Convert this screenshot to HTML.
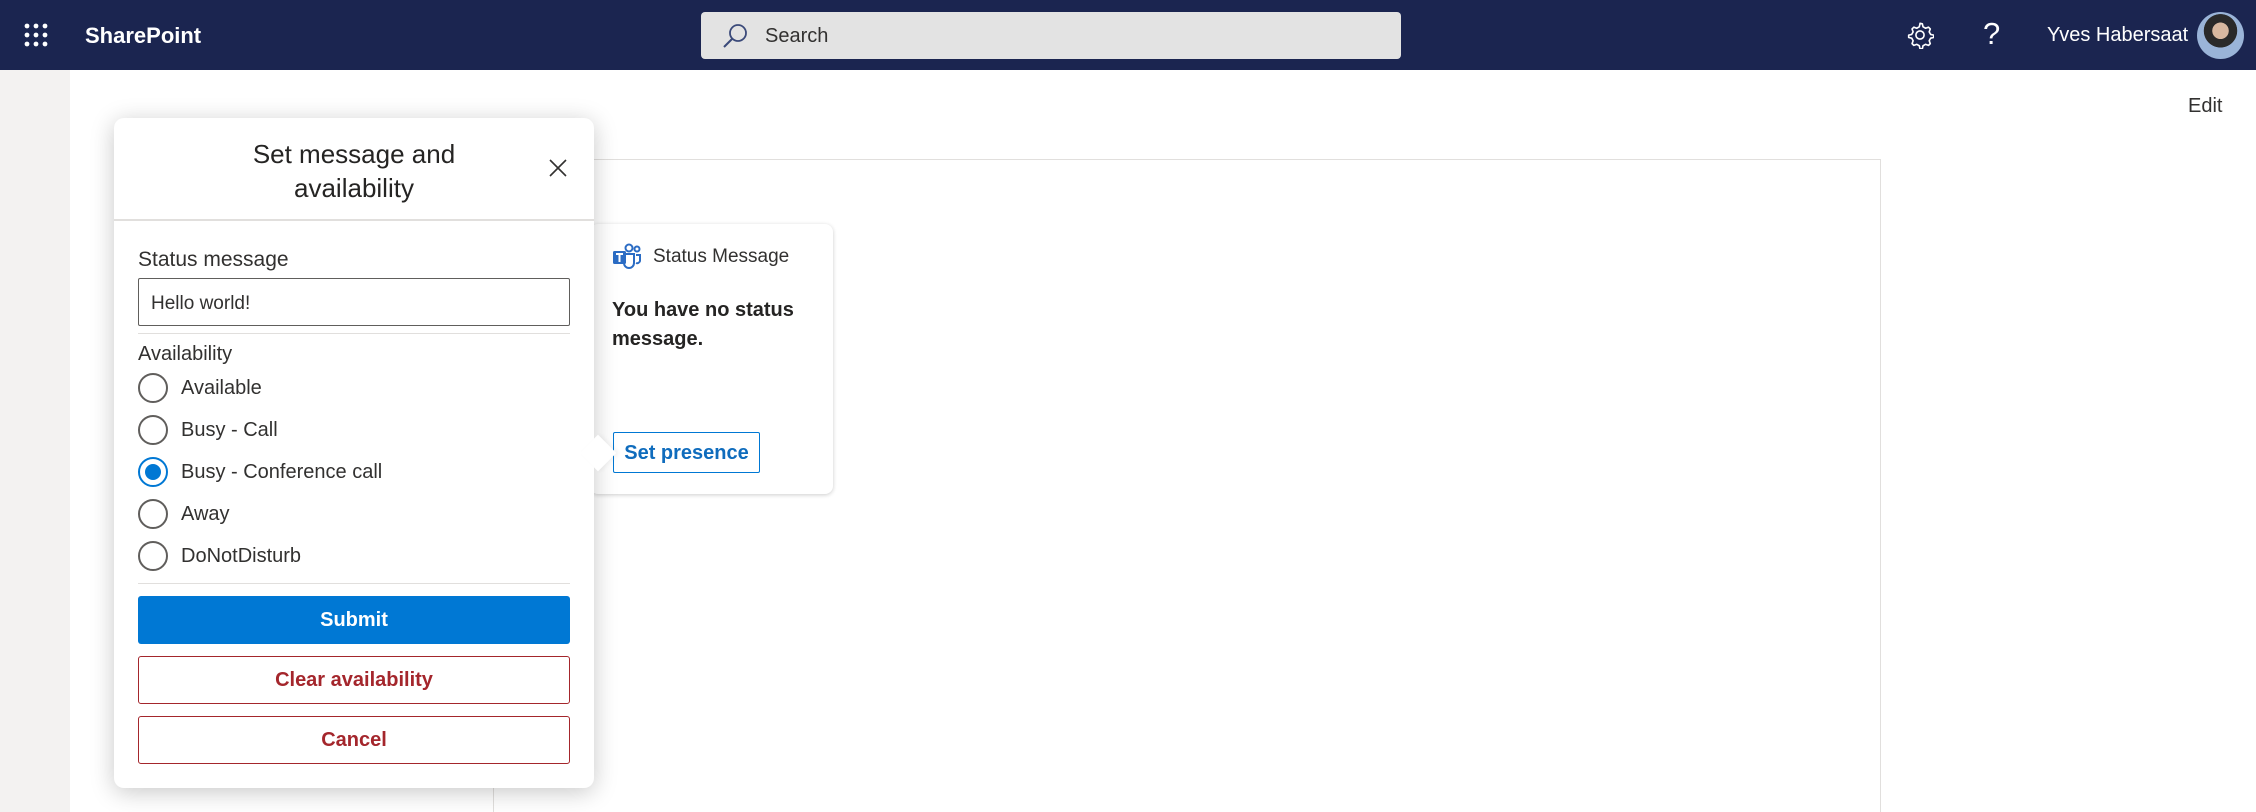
<!DOCTYPE html>
<html style="width:2256px;height:812px;overflow:hidden"><head><meta charset="utf-8"><style>
*{box-sizing:border-box;margin:0;padding:0}
body{width:2256px;height:812px;overflow:hidden;background:#fff;font-family:"Liberation Sans",sans-serif;color:#323130;position:relative}
.hdr{position:absolute;left:0;top:0;width:2256px;height:70px;background:#1b2550}
.abs{position:absolute}
.side{position:absolute;left:0;top:70px;width:70px;height:742px;background:#f3f2f1}
.radio{position:absolute;left:138px;width:30px;height:30px;border:2px solid #605e5c;border-radius:50%}
.rl{position:absolute;left:181px;font-size:20px;color:#323130}
.btn{position:absolute;left:138px;width:432px;height:48px;border-radius:3px;font-size:20px;font-weight:bold;text-align:center;line-height:48px}
</style></head><body>
<div class="hdr"></div>
<svg class="abs" style="left:24px;top:23px" width="24" height="24"><g fill="#fff"><circle cx="3" cy="3" r="2.4"/><circle cx="12" cy="3" r="2.4"/><circle cx="21" cy="3" r="2.4"/><circle cx="3" cy="12" r="2.4"/><circle cx="12" cy="12" r="2.4"/><circle cx="21" cy="12" r="2.4"/><circle cx="3" cy="21" r="2.4"/><circle cx="12" cy="21" r="2.4"/><circle cx="21" cy="21" r="2.4"/></g></svg>
<div class="abs" style="left:85px;top:23px;font-size:22px;font-weight:bold;color:#fff">SharePoint</div>
<div class="abs" style="left:701px;top:12px;width:700px;height:47px;background:#e3e3e3;border-radius:4px"></div>
<svg class="abs" style="left:722px;top:23px" width="26" height="26"><circle cx="16" cy="10" r="8" fill="none" stroke="#3b4a7a" stroke-width="1.8"/><path d="M10 16 L2 24" stroke="#3b4a7a" stroke-width="2"/></svg>
<div class="abs" style="left:765px;top:25px;font-size:20px;color:#323130">Search</div>
<svg class="abs" style="left:1906px;top:21px" width="28" height="28" viewBox="0 0 24 24"><path d="M12 2l2 0.4 0.6 2.6 2.2 1.2 2.5-0.9 1.5 1.5-0.9 2.5 1.2 2.2 2.6 0.6v2l-2.6 0.6-1.2 2.2 0.9 2.5-1.5 1.5-2.5-0.9-2.2 1.2-0.6 2.6h-2l-0.6-2.6-2.2-1.2-2.5 0.9-1.5-1.5 0.9-2.5-1.2-2.2-2.6-0.6v-2l2.6-0.6 1.2-2.2-0.9-2.5 1.5-1.5 2.5 0.9 2.2-1.2 0.6-2.6z" fill="none" stroke="#fff" stroke-width="1.4" stroke-linejoin="round"/><circle cx="12" cy="12" r="3.5" fill="none" stroke="#fff" stroke-width="1.4"/></svg>
<div class="abs" style="left:1983px;top:16px;font-size:31px;color:#fff">?</div>
<div class="abs" style="left:2047px;top:24px;font-size:20px;color:#fff">Yves Habersaat</div>
<div class="abs" style="left:2197px;top:12px;width:47px;height:47px;border-radius:50%;background:radial-gradient(circle at 50% 40%,#d8b8a0 0 22%,#2a2a2a 23% 45%,#9ab4d8 46%)"></div>
<div class="side"></div>
<div class="abs" style="left:2188px;top:95px;font-size:20px;color:#323130">Edit</div>
<div class="abs" style="left:493px;top:159px;width:1388px;height:653px;border:1px solid #e1dfdd;border-bottom:none"></div>
<!-- card -->
<div class="abs" style="left:590px;top:224px;width:243px;height:270px;background:#fff;border-radius:8px;box-shadow:0 1px 4px rgba(0,0,0,.2)"></div>
<svg class="abs" style="left:612px;top:243px" width="30" height="28" viewBox="0 0 30 28"><circle cx="17" cy="5" r="3.5" fill="none" stroke="#2b6cc4" stroke-width="2"/><circle cx="25" cy="6" r="2.5" fill="none" stroke="#2b6cc4" stroke-width="2"/><path d="M12 11h10v9a5 5 0 0 1-10 0z" fill="none" stroke="#2b6cc4" stroke-width="2"/><path d="M24 12h4v6a3 3 0 0 1-4 2" fill="none" stroke="#2b6cc4" stroke-width="2"/><rect x="1" y="8" width="13" height="13" rx="1.5" fill="#2b6cc4"/><path d="M4 11h7M7.5 11v8" stroke="#fff" stroke-width="2"/></svg>
<div class="abs" style="left:653px;top:246px;font-size:19px;color:#323130">Status Message</div>
<div class="abs" style="left:612px;top:296px;font-size:20px;font-weight:bold;line-height:29px;color:#252423">You have no status<br>message.</div>
<div class="abs" style="left:613px;top:432px;width:147px;height:41px;border:1px solid #0078d4;border-radius:2px;color:#0f6cbd;font-size:20px;font-weight:bold;text-align:center;line-height:41px">Set presence</div>
<!-- dialog -->
<div class="abs" style="left:114px;top:118px;width:480px;height:670px;background:#fff;border-radius:10px;box-shadow:0 4px 24px rgba(0,0,0,.22)"></div>
<div class="abs" style="left:585px;top:440px;width:26px;height:26px;background:#fff;transform:rotate(45deg);box-shadow:2px -2px 4px rgba(0,0,0,.05)"></div>
<div class="abs" style="left:114px;top:137px;width:480px;text-align:center;font-size:26px;line-height:34px;color:#252423;padding-right:40px;padding-left:40px">Set message and<br>availability</div>
<svg class="abs" style="left:549px;top:159px" width="18" height="18"><path d="M1 1L17 17M17 1L1 17" stroke="#323130" stroke-width="1.6"/></svg>
<div class="abs" style="left:114px;top:219px;width:480px;height:2px;background:#e1dfdd"></div>
<div class="abs" style="left:138px;top:248px;font-size:21px">Status message</div>
<div class="abs" style="left:138px;top:278px;width:432px;height:48px;border:1px solid #605e5c;border-radius:2px;font-size:19px;padding:14px 12px;color:#323130">Hello world!</div>
<div class="abs" style="left:138px;top:333px;width:432px;height:1px;background:#e1dfdd"></div>
<div class="abs" style="left:138px;top:343px;font-size:20px">Availability</div>
<div class="radio" style="top:373px"></div><div class="rl" style="top:377px">Available</div>
<div class="radio" style="top:415px"></div><div class="rl" style="top:419px">Busy - Call</div>
<div class="radio" style="top:457px;border-color:#0078d4"><div style="position:absolute;left:5px;top:5px;width:16px;height:16px;border-radius:50%;background:#0078d4"></div></div><div class="rl" style="top:461px">Busy - Conference call</div>
<div class="radio" style="top:499px"></div><div class="rl" style="top:503px">Away</div>
<div class="radio" style="top:541px"></div><div class="rl" style="top:545px">DoNotDisturb</div>
<div class="abs" style="left:138px;top:583px;width:432px;height:1px;background:#e1dfdd"></div>
<div class="btn" style="top:596px;background:#0078d4;color:#fff">Submit</div>
<div class="btn" style="top:656px;border:1px solid #a4262c;color:#a4262c;line-height:46px">Clear availability</div>
<div class="btn" style="top:716px;border:1px solid #a4262c;color:#a4262c;line-height:46px">Cancel</div>
</body></html>
